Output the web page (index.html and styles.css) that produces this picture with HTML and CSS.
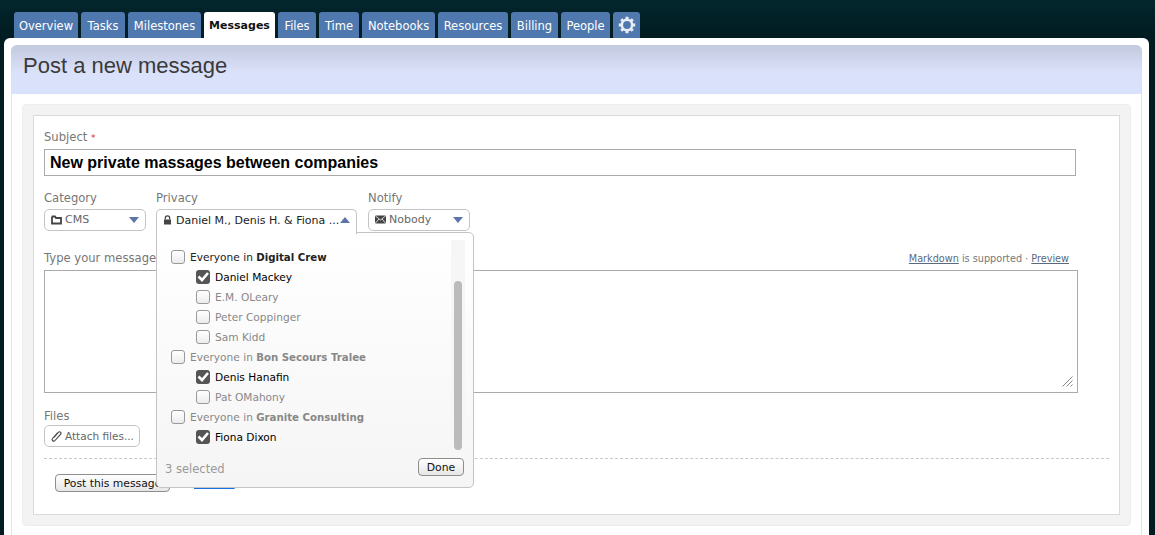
FILE: index.html
```html
<!DOCTYPE html>
<html>
<head>
  <meta charset="utf-8">
  <title>Post a new message</title>
  <link rel="stylesheet" href="styles.css">
</head>
<body>
  <nav class="tabs">
    <a class="tab tab-overview">Overview</a>
    <a class="tab tab-tasks">Tasks</a>
    <a class="tab tab-milestones">Milestones</a>
    <a class="tab tab-active">Messages</a>
    <a class="tab tab-files">Files</a>
    <a class="tab tab-time">Time</a>
    <a class="tab tab-notebooks">Notebooks</a>
    <a class="tab tab-resources">Resources</a>
    <a class="tab tab-billing">Billing</a>
    <a class="tab tab-people">People</a>
    <a class="tab tab-gear">
      <svg width="18" height="18" viewBox="0 0 18 18">
        <circle cx="9" cy="9" r="5.2" fill="none" stroke="#e8edf5" stroke-width="2.6"/>
        <g stroke="#e8edf5" stroke-width="3">
          <path d="M9 0.8v3M9 14.2v3M0.8 9h3M14.2 9h3M3.2 3.2l2.1 2.1M12.7 12.7l2.1 2.1M14.8 3.2l-2.1 2.1M5.3 12.7l-2.1 2.1"/>
        </g>
      </svg>
    </a>
  </nav>

  <main class="panel">
    <div class="inner">
      <header class="page-head">
        <h1>Post a new message</h1>
      </header>

      <div class="card">
        <form class="form-box">
          <label class="field-label">Subject <span class="req">*</span></label>
          <input class="subject" type="text" value="New private massages between companies">

          <div class="selects">
            <div class="select-col col-category">
              <label class="field-label">Category</label>
              <div class="select">
                <svg class="ico" width="11" height="10" viewBox="0 0 11 10"><path d="M1 2.500V8.500H10V3H5L4 1.500H1.500Z" fill="none" stroke="#444" stroke-width="1.800"/></svg>
                <span class="select-text">CMS</span>
                <span class="arrow-down"></span>
              </div>
            </div>
            <div class="select-col col-privacy">
              <label class="field-label">Privacy</label>
              <div class="select select-open">
                <svg class="ico ico-lock" width="9" height="10" viewBox="0 0 9 10"><path d="M2.300 4.500V3a2.200 2.200 0 0 1 4.400 0V4.500" fill="none" stroke="#444" stroke-width="1.200"/><rect x="1" y="4.500" width="7" height="5" fill="#444"/></svg>
                <span class="select-text">Daniel M., Denis H. &amp; Fiona ...</span>
                <span class="arrow-up"></span>
              </div>
            </div>
            <div class="select-col col-notify">
              <label class="field-label">Notify</label>
              <div class="select">
                <svg class="ico" width="11" height="9" viewBox="0 0 11 9"><rect x="0" y="0.500" width="11" height="8" rx="1" fill="#444"/><path d="M0.500 1L5.500 5L10.500 1M0.500 8L4 4M10.500 8L7 4" fill="none" stroke="#fff" stroke-width="0.800"/></svg>
                <span class="select-text muted">Nobody</span>
                <span class="arrow-down"></span>
              </div>
            </div>
          </div>

          <div class="message-head">
            <label class="field-label">Type your message</label>
            <span class="hints"><a>Markdown</a> is supported · <a>Preview</a></span>
          </div>
          <div class="message-wrap">
            <textarea class="message"></textarea>
            <svg class="grip" width="11" height="11" viewBox="0 0 11 11"><path d="M0.500 10.500L10.500 0.500M4.500 10.500L10.500 4.500M8.500 10.500L10.500 8.500" stroke="#888" stroke-width="1" fill="none"/></svg>
          </div>

          <label class="field-label files-label">Files</label>
          <div class="select attach">
            <svg class="ico" width="11" height="12" viewBox="0 0 11 12"><path d="M3 7.500L7.500 2.200a1.500 1.500 0 0 1 2.200 2L4 10.500a1.500 1.500 0 0 1-2.500-2L6.500 2.800" fill="none" stroke="#444" stroke-width="1.100"/></svg>
            <span class="select-text muted">Attach files...</span>
          </div>

          <div class="actions">
            <button class="btn" type="button">Post this message</button>
            <a class="cancel">Cancel</a>
          </div>
        </form>
      </div>
    </div>
  </main>

  <!-- privacy dropdown, open over the form -->
  <div class="menu">
    <div class="menu-list">
      <div class="row"><span class="box"></span><span class="row-text">Everyone in <b>Digital Crew</b></span></div>
      <div class="row row-person on"><span class="box box-on"><svg width="14" height="14" viewBox="0 0 14 14"><path d="M2.500 6.500L6 10L12 3" fill="none" stroke="#fff" stroke-width="2.600"/></svg></span><span class="row-text">Daniel Mackey</span></div>
      <div class="row row-person off"><span class="box"></span><span class="row-text">E.M. OLeary</span></div>
      <div class="row row-person off"><span class="box"></span><span class="row-text">Peter Coppinger</span></div>
      <div class="row row-person off"><span class="box"></span><span class="row-text">Sam Kidd</span></div>
      <div class="row off"><span class="box"></span><span class="row-text">Everyone in <b>Bon Secours Tralee</b></span></div>
      <div class="row row-person on"><span class="box box-on"><svg width="14" height="14" viewBox="0 0 14 14"><path d="M2.500 6.500L6 10L12 3" fill="none" stroke="#fff" stroke-width="2.600"/></svg></span><span class="row-text">Denis Hanafin</span></div>
      <div class="row row-person off"><span class="box"></span><span class="row-text">Pat OMahony</span></div>
      <div class="row off"><span class="box"></span><span class="row-text">Everyone in <b>Granite Consulting</b></span></div>
      <div class="row row-person on"><span class="box box-on"><svg width="14" height="14" viewBox="0 0 14 14"><path d="M2.500 6.500L6 10L12 3" fill="none" stroke="#fff" stroke-width="2.600"/></svg></span><span class="row-text">Fiona Dixon</span></div>
      <div class="scrollbar"><div class="thumb"></div></div>
    </div>
    <div class="menu-foot">
      <span class="count">3 selected</span>
      <button class="btn btn-done" type="button">Done</button>
    </div>
  </div>
</body>
</html>
```

FILE: styles.css
```css
/* basic layout */
html, body {
  margin: 0;
  height: 535px;
  overflow: hidden;
}

body {
  position: relative;
  font-family: "DejaVu Sans", sans-serif;
  font-size: 11px;
  color: #333;
  background: linear-gradient(#03262d 0, #011b20 40px);
}

/* tabs */
.tabs {
  display: flex;
  gap: 3px;
  height: 26px;
  padding: 12px 0 0 14px;
}

.tab {
  box-sizing: border-box;
  height: 26px;
  line-height: 28px;
  text-align: center;
  font-size: 11.5px;
  color: #fff;
  background: #4f78ae;
  border-radius: 3px 3px 0 0;
}

.tab-overview { width: 64px; }
.tab-tasks { width: 44px; }
.tab-milestones { width: 73px; }
.tab-active { width: 71px; background: #fff; color: #111; font-weight: bold; font-size: 11px; }
.tab-files { width: 38px; }
.tab-time { width: 40px; }
.tab-notebooks { width: 73px; }
.tab-resources { width: 70px; }
.tab-billing { width: 47px; }
.tab-people { width: 49px; }
.tab-gear { width: 27px; padding-top: 4px; line-height: 0; }

/* main panel */
.panel {
  margin: 0 6px 0 4px;
  height: 497px;
  padding: 7px 7px 0;
  background: #fff;
  border-radius: 6px 6px 0 0;
  box-sizing: border-box;
}

.inner {
  height: 490px;
  border: solid #dde3f2;
  border-width: 0 1px;
  border-radius: 6px 6px 0 0;
}

.page-head {
  height: 49px;
  margin: 0 -1px;
  padding-left: 12px;
  background: linear-gradient(#c3cadf 0, #dae1fa 28px);
  border-radius: 6px 6px 0 0;
}

.page-head h1 {
  margin: 0;
  font-family: "Liberation Sans", sans-serif;
  font-size: 22px;
  font-weight: normal;
  line-height: 42px;
  color: #3a3a3a;
}

.card {
  margin: 10px 10px 0;
  padding: 10px;
  height: 422px;
  box-sizing: border-box;
  background: #f3f3f3;
  border: 1px solid #eeeeee;
  border-radius: 4px;
}

/* form */
.form-box {
  display: flex;
  flex-direction: column;
  align-items: flex-start;
  box-sizing: border-box;
  height: 400px;
  padding: 14px 10px 0;
  background: #fff;
  border: 1px solid #dadada;
}

.field-label {
  display: block;
  font-size: 11.6px;
  line-height: 15px;
  color: #777;
}

.req {
  color: #e02040;
  font-size: 9px;
}

.subject {
  box-sizing: border-box;
  width: 1032px;
  height: 27px;
  margin: 3px 0 0;
  padding: 0 5px;
  font-family: "Liberation Sans", sans-serif;
  font-size: 16px;
  font-weight: bold;
  color: #000;
  border: 1px solid #aaa;
  border-radius: 0;
  outline: none;
}

.selects {
  display: flex;
  margin-top: 15px;
}

.col-category { width: 112px; }
.col-privacy { width: 212px; }

.select {
  display: flex;
  align-items: center;
  box-sizing: border-box;
  height: 22px;
  margin-top: 3px;
  padding: 0 6px 1px 6px;
  background: #fff;
  border: 1px solid #c4c4c4;
  border-radius: 5px;
}

.col-category .select { width: 102px; }
.col-notify .select { width: 102px; }

.select-open {
  position: relative;
  z-index: 3;
  width: 201px;
  height: 25px;
  padding-bottom: 4px;
  border-bottom: none;
  border-radius: 5px 5px 0 0;
}

.ico {
  flex: none;
  margin-right: 3px;
}

.ico-lock { margin-right: 4px; }

.select-text {
  flex: 1;
  font-size: 11px;
  color: #222;
  white-space: nowrap;
}

.col-category .select-text, .muted {
  color: #666;
}

.arrow-down, .arrow-up {
  flex: none;
  width: 0;
  height: 0;
  border-left: 5.5px solid transparent;
  border-right: 5.5px solid transparent;
}

.arrow-down { border-top: 6px solid #5c74a8; }
.arrow-up { border-bottom: 6px solid #5c74a8; }

.message-head {
  display: flex;
  justify-content: space-between;
  align-items: center;
  box-sizing: border-box;
  width: 1025px;
  margin-top: 17px;
  height: 15px;
}

.hints {
  font-size: 9.7px;
  color: #777;
}

.hints a {
  color: #5a6a80;
  text-decoration: underline;
}

.message-wrap {
  position: relative;
  height: 123px;
  margin-top: 4px;
}

.message {
  display: block;
  box-sizing: border-box;
  width: 1034px;
  height: 123px;
  margin: 0;
  border: 1px solid #aaa;
  border-radius: 0;
  outline: none;
  resize: none;
}

.grip {
  position: absolute;
  right: 5px;
  bottom: 6px;
}

.files-label {
  margin-top: 16px;
}

.attach {
  width: 96px;
  margin-top: 1px;
  padding: 0 0 1px 6px;
}

.attach .select-text {
  font-size: 10.5px;
}

.actions {
  display: flex;
  align-items: center;
  gap: 24px;
  align-self: stretch;
  margin-top: 11px;
  padding: 15px 0 0 11px;
  border-top: 1px dashed #c8c8c8;
}

.btn {
  box-sizing: border-box;
  height: 18px;
  padding: 0;
  font-family: "DejaVu Sans", sans-serif;
  font-size: 10.8px;
  color: #111;
  background: linear-gradient(#fff, #e6e6e6);
  border: 1px solid #8e8e8e;
  border-radius: 4px;
}

.actions .btn { width: 115px; }

.cancel {
  font-size: 12px;
  color: #1a6fe0;
  text-decoration: underline;
}

/* privacy menu */
.menu {
  position: absolute;
  left: 156px;
  top: 232px;
  z-index: 2;
  width: 318px;
  height: 256px;
  box-sizing: border-box;
  background: linear-gradient(#fff, #f5f5f5);
  border: 1px solid #c4c4c4;
  border-radius: 0 5px 5px 5px;
}

.menu-list {
  position: relative;
  height: 219px;
  padding: 14px 0 0 14px;
  box-sizing: border-box;
}

.row {
  display: flex;
  align-items: center;
  height: 20px;
  font-size: 10.6px;
  color: #222;
}

.row b { font-size: 10.2px; }
.row.off { color: #888; }
.row.on { color: #000; }
.row-person { padding-left: 25px; }

.box {
  flex: none;
  box-sizing: border-box;
  width: 14px;
  height: 14px;
  margin-right: 5px;
  background: linear-gradient(#fff, #ececec);
  border: 1px solid #999;
  border-radius: 3px;
}

.box-on {
  background: #555;
  border: none;
  line-height: 0;
}

.scrollbar {
  position: absolute;
  right: 8px;
  top: 7px;
  width: 14px;
  height: 212px;
  background: #f6f6f6;
}

.thumb {
  position: absolute;
  left: 3px;
  top: 41px;
  width: 8px;
  height: 169px;
  background: #bbb;
  border-radius: 4px;
}

.menu-foot {
  display: flex;
  justify-content: space-between;
  align-items: center;
  padding: 6px 9px 0 8px;
}

.count {
  margin-top: 3px;
  font-size: 11.5px;
  color: #999;
}

.btn-done {
  width: 46px;
}
```
